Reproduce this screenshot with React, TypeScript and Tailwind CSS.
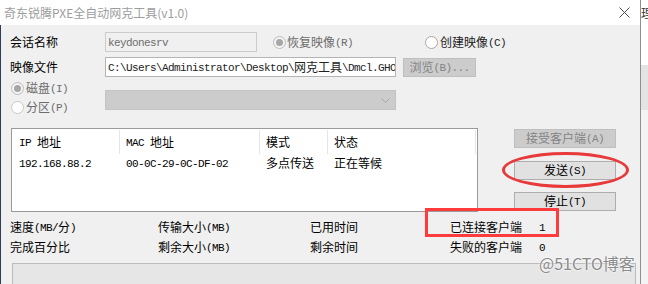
import React from "react";

const MONO = "font-['Liberation_Mono',monospace] text-[11px] tracking-[-0.6px] align-[1px]";

function M({ t }: { t: string }) {
  const parts = t.split(/([\x00-\xff]+)/).filter(Boolean);
  return (
    <span className="whitespace-pre">
      {parts.map((p, i) =>
        /^[\x00-\xff]+$/.test(p) ? (
          <span key={i} className={MONO}>
            {p}
          </span>
        ) : (
          <span key={i}>{p}</span>
        )
      )}
    </span>
  );
}

function Radio({ checked, enabled }: { checked?: boolean; enabled?: boolean }) {
  return (
    <span
      className={
        enabled
          ? "w-[13px] h-[13px] shrink-0 rounded-full border border-[#a8a8a8] bg-white flex items-center justify-center"
          : checked
          ? "w-[13px] h-[13px] shrink-0 rounded-full border border-[#bcbcbc] bg-[#f4f4f4] flex items-center justify-center"
          : "w-[13px] h-[13px] shrink-0 rounded-full border border-[#c8c8c8] bg-white flex items-center justify-center"
      }
    >
      {checked && <span className="w-[7px] h-[7px] rounded-full bg-[#a6a6a6]" />}
    </span>
  );
}

export default function App() {
  return (
    <div className="w-[648px] h-[284px] flex overflow-hidden relative bg-[#f0f0f0] font-['Noto_Sans_CJK_SC',sans-serif] text-[12px] leading-none text-black">
      {/* window */}
      <div className="w-[640px] shrink-0 flex flex-col">
        <div className="h-[25px] shrink-0 bg-white flex items-center pl-[4px] text-[#9d9d9d]">
          <span>奇东锐腾PXE全自动网克工具(v1.0)</span>
          <svg className="ml-auto mr-[10px]" width="11" height="11" viewBox="0 0 11 11">
            <path d="M0.5 0.5 L10.5 10.5 M10.5 0.5 L0.5 10.5" stroke="#4a4a4a" strokeWidth="1" />
          </svg>
        </div>
        <div className="flex-1 flex bg-[#f0f0f0]">
          <div className="w-px shrink-0 bg-[#2e3d5c]" />
          <div className="flex-1 flex flex-col pl-[9px]">
            {/* row 1 */}
            <div className="mt-[7px] h-[20px] flex items-center">
              <div className="w-[95px]">会话名称</div>
              <div className="w-[152px] h-[20px] border border-[#cccccc] bg-[#f0f0f0] text-[#6d6d6d] pl-[2px] flex items-center">
                <M t="keydonesrv" />
              </div>
              <div className="ml-[16px] w-[152px] flex items-center text-[#6d6d6d]">
                <Radio checked />
                <span className="ml-[1px]">
                  <M t="恢复映像(R)" />
                </span>
              </div>
              <div className="flex items-center text-[#222]">
                <Radio enabled />
                <span className="ml-[2px]">
                  <M t="创建映像(C)" />
                </span>
              </div>
            </div>
            {/* row 2 */}
            <div className="mt-[5px] h-[20px] flex items-center">
              <div className="w-[95px]">映像文件</div>
              <div className="w-[291px] h-[20px] border border-[#b4b4b4] bg-white pl-[2px] flex items-center overflow-hidden whitespace-nowrap text-[#222]">
                <M t="C:\Users\Administrator\Desktop\网克工具\Dmcl.GHO" />
              </div>
              <div className="ml-[7px] w-[73px] h-[19px] border border-[#bfbfbf] bg-[#cccccc] text-[#838383] flex items-center justify-center">
                <M t="浏览(B)..." />
              </div>
            </div>
            {/* row 3 */}
            <div className="mt-[2px] flex">
              <div className="w-[95px] flex flex-col text-[#6d6d6d]">
                <div className="h-[19px] pl-[1px] flex items-center">
                  <Radio checked />
                  <span className="ml-[2px]">
                    <M t="磁盘(I)" />
                  </span>
                </div>
                <div className="h-[19px] pl-[1px] flex items-center">
                  <Radio />
                  <span className="ml-[2px]">
                    <M t="分区(P)" />
                  </span>
                </div>
              </div>
              <div className="mt-[11px] w-[291px] h-[20px] border border-[#c4c4c4] bg-[#cccccc] flex items-center justify-end pr-[5px]">
                <svg width="9" height="5" viewBox="0 0 9 5">
                  <path d="M0.5 0.5 L4.5 4.5 L8.5 0.5" fill="none" stroke="#a9a9a9" strokeWidth="1" />
                </svg>
              </div>
            </div>
            {/* list + buttons */}
            <div className="mt-[11px] flex">
              <div className="ml-[1px] w-[467px] h-[84px] border border-[#9a9a9a] bg-white flex flex-col">
                <div className="h-[26px] flex items-center">
                  <div className="w-[108px] h-[24px] border-r border-[#e5e5e5] pl-[7px] flex items-center">
                    <M t="IP 地址" />
                  </div>
                  <div className="w-[140px] h-[24px] border-r border-[#e5e5e5] pl-[6px] flex items-center">
                    <M t="MAC 地址" />
                  </div>
                  <div className="w-[68px] h-[24px] border-r border-[#e5e5e5] pl-[6px] flex items-center">模式</div>
                  <div className="w-[148px] h-[24px] border-r border-[#e5e5e5] pl-[6px] flex items-center">状态</div>
                </div>
                <div className="h-[16px] flex items-center">
                  <div className="w-[108px] pl-[7px]">
                    <M t="192.168.88.2" />
                  </div>
                  <div className="w-[140px] pl-[6px]">
                    <M t="00-0C-29-0C-DF-02" />
                  </div>
                  <div className="w-[68px] pl-[6px]">多点传送</div>
                  <div className="w-[148px] pl-[6px]">正在等候</div>
                </div>
              </div>
              <div className="ml-[36px] w-[102px] flex flex-col">
                <div className="mt-[1px] h-[19px] border border-[#bfbfbf] bg-[#cccccc] text-[#838383] flex items-center justify-center">
                  <M t="接受客户端(A)" />
                </div>
                <div className="mt-[13px] h-[19px] border border-[#adadad] bg-[#e1e1e1] flex items-center justify-center">
                  <M t="发送(S)" />
                </div>
                <div className="mt-[12px] h-[19px] border border-[#adadad] bg-[#e1e1e1] flex items-center justify-center">
                  <M t="停止(T)" />
                </div>
              </div>
            </div>
            {/* stats */}
            <div className="mt-[5px] h-[20px] flex items-center">
              <div className="w-[148px]">
                <M t="速度(MB/分)" />
              </div>
              <div className="w-[152px]">
                <M t="传输大小(MB)" />
              </div>
              <div className="w-[140px]">已用时间</div>
              <div className="w-[89px]">已连接客户端</div>
              <div>
                <M t="1" />
              </div>
            </div>
            <div className="h-[20px] flex items-center">
              <div className="w-[148px]">完成百分比</div>
              <div className="w-[152px]">
                <M t="剩余大小(MB)" />
              </div>
              <div className="w-[140px]">剩余时间</div>
              <div className="w-[89px]">失败的客户端</div>
              <div>
                <M t="0" />
              </div>
            </div>
            <div className="mt-[6px] ml-[2px] w-[624px] h-[24px] shrink-0 border border-[#bcbcbc] bg-[#e6e6e6]" />
          </div>
        </div>
      </div>
      {/* background app strip */}
      <div className="w-[8px] shrink-0 flex flex-col border-l border-[#8f8f8f] overflow-hidden">
        <div className="h-[65px] bg-white text-[#333] pt-[7px] whitespace-nowrap">理3</div>
        <div className="h-[45px] bg-[#e4e4e4]" />
        <div className="flex-1 bg-[#f4f4f4]" />
      </div>

      {/* annotations */}
      <div className="absolute left-[502px] top-[152px] w-[127px] h-[36px] rounded-[50%] border-[3px] border-[#e8393b]" />
      <div className="absolute left-[425px] top-[208px] w-[134px] h-[29px] border-[3px] border-[#ff3b3b]" />
      <div className="absolute left-[539px] top-[255px] text-[16px] text-[#8a8a8a] font-['Noto_Sans_CJK_SC',sans-serif] [text-shadow:0_0_2px_#fff,0_0_2px_#fff]">
        @51CTO博客
      </div>
    </div>
  );
}
